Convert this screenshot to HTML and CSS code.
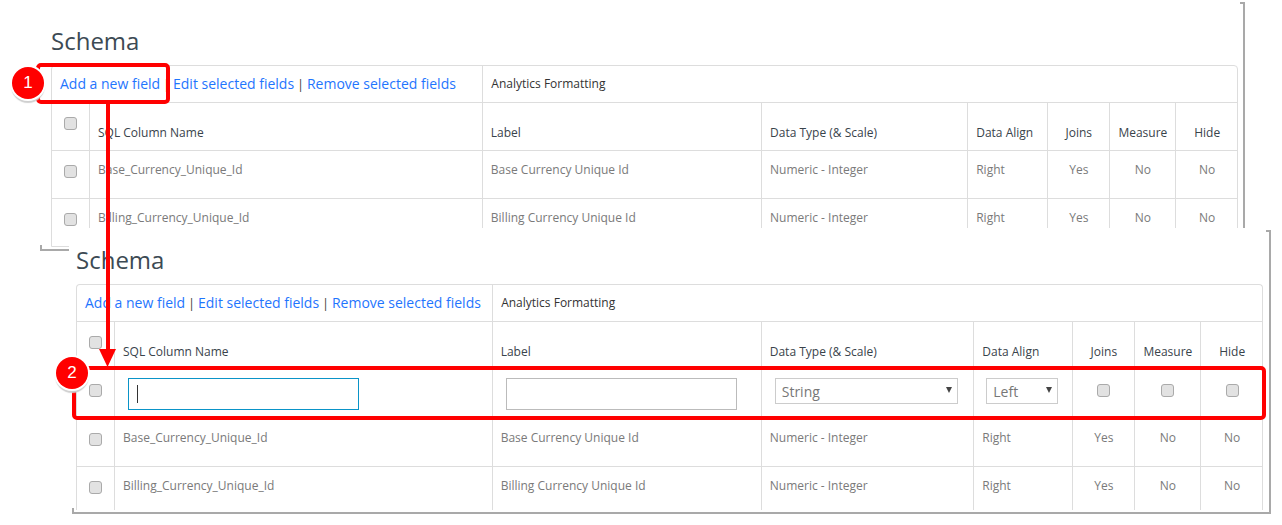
FILE: index.html
```html
<!DOCTYPE html>
<html lang="en">
<head>
<meta charset="utf-8">
<title>Schema</title>
<link rel="stylesheet" href="styles.css">
</head>
<body>
<section class="window window-a">
  <h2 class="title">Schema</h2>
  <div class="table-clip">
    <table class="schema schema-a">
      <colgroup><col class="c-check"><col class="c-name"><col class="c-label"><col class="c-type"><col class="c-align"><col class="c-joins"><col class="c-measure"><col class="c-hide"></colgroup>
      <tr class="toolbar">
        <td colspan="2"><a href="#">Add a new field</a> | <a href="#">Edit selected fields</a> | <a href="#">Remove selected fields</a></td>
        <td colspan="6">Analytics Formatting</td>
      </tr>
      <tr class="head">
        <th class="check"><input type="checkbox" class="box"></th>
        <th>SQL Column Name</th><th>Label</th><th>Data Type (&amp; Scale)</th><th>Data Align</th>
        <th class="mid">Joins</th><th class="mid">Measure</th><th class="mid">Hide</th>
      </tr>
      <tr class="row">
        <td class="check"><input type="checkbox" class="box"></td>
        <td>Base_Currency_Unique_Id</td><td>Base Currency Unique Id</td><td>Numeric - Integer</td><td>Right</td>
        <td class="mid">Yes</td><td class="mid">No</td><td class="mid">No</td>
      </tr>
      <tr class="row">
        <td class="check"><input type="checkbox" class="box"></td>
        <td>Billing_Currency_Unique_Id</td><td>Billing Currency Unique Id</td><td>Numeric - Integer</td><td>Right</td>
        <td class="mid">Yes</td><td class="mid">No</td><td class="mid">No</td>
      </tr>
    </table>
  </div>
</section>

<section class="window window-b">
  <h2 class="title">Schema</h2>
  <div class="table-clip">
    <table class="schema schema-b">
      <colgroup><col class="c-check"><col class="c-name"><col class="c-label"><col class="c-type"><col class="c-align"><col class="c-joins"><col class="c-measure"><col class="c-hide"></colgroup>
      <tr class="toolbar">
        <td colspan="2"><a href="#">Add a new field</a> | <a href="#">Edit selected fields</a> | <a href="#">Remove selected fields</a></td>
        <td colspan="6">Analytics Formatting</td>
      </tr>
      <tr class="head">
        <th class="check"><input type="checkbox" class="box"></th>
        <th>SQL Column Name</th><th>Label</th><th>Data Type (&amp; Scale)</th><th>Data Align</th>
        <th class="mid">Joins</th><th class="mid">Measure</th><th class="mid">Hide</th>
      </tr>
      <tr class="row edit">
        <td class="check"><input type="checkbox" class="box"></td>
        <td><span class="field focused"><input type="text" class="text"></span></td>
        <td><span class="field"><input type="text" class="text"></span></td>
        <td><span class="pick pick-type"><select><option>String</option></select></span></td>
        <td><span class="pick pick-align"><select><option>Left</option></select></span></td>
        <td class="mid"><input type="checkbox" class="box"></td>
        <td class="mid"><input type="checkbox" class="box"></td>
        <td class="mid"><input type="checkbox" class="box"></td>
      </tr>
      <tr class="row">
        <td class="check"><input type="checkbox" class="box"></td>
        <td>Base_Currency_Unique_Id</td><td>Base Currency Unique Id</td><td>Numeric - Integer</td><td>Right</td>
        <td class="mid">Yes</td><td class="mid">No</td><td class="mid">No</td>
      </tr>
      <tr class="row">
        <td class="check"><input type="checkbox" class="box"></td>
        <td>Billing_Currency_Unique_Id</td><td>Billing Currency Unique Id</td><td>Numeric - Integer</td><td>Right</td>
        <td class="mid">Yes</td><td class="mid">No</td><td class="mid">No</td>
      </tr>
    </table>
  </div>
</section>

<div class="callout callout-1"></div>
<div class="callout callout-2"></div>
<svg class="arrow" width="18" height="264" viewBox="0 0 18 264" aria-hidden="true">
  <rect x="7" y="0" width="4" height="246" fill="#f00"/>
  <polygon points="0,245 17,245 8.5,263" fill="#f00"/>
</svg>
<div class="badge badge-1">1</div>
<div class="badge badge-2">2</div>
</body>
</html>
```
FILE: styles.css
```css
* { box-sizing: border-box; }
html, body { margin: 0; height: 525px; overflow: hidden; background: #fff; }
body { position: relative; font: 12px/17px "Open Sans", sans-serif; color: #333; }

/* The two pasted screenshots lie on a free canvas */
.window { position: absolute; background: #fff; border-right: 2px solid #a9a9a9; border-bottom: 2px solid #a9a9a9; }
.window::before { content: ""; position: absolute; top: 0; right: 0; width: 3px; height: 2px; background: #a9a9a9; }
.window::after { content: ""; position: absolute; bottom: 0; left: 0; width: 2px; height: 4px; background: #a9a9a9; }
.window-a { left: 40px; top: 2px; width: 1205px; height: 249px; padding: 22px 0 0 11px; }
.window-b { left: 72px; top: 230px; width: 1199px; height: 284px; padding: 13px 0 0 4px; box-shadow: -3px -2px 0 #fff; }

.title { margin: 0 0 7px; font-weight: 400; font-size: 24px; line-height: 34px; color: #3c4a54; }

.table-clip { width: 1187px; overflow: hidden; border: 1px solid #ddd; border-radius: 4px 4px 0 0; }
.window-a .table-clip { height: 182px; }
.window-b .table-clip { height: 226px; border-bottom: 0; }

.schema { width: 1186px; table-layout: fixed; border-collapse: collapse; }
.schema td, .schema th { padding: 0 8px; border: 1px solid #ddd; text-align: left; }
.schema tr:first-child td { border-top: 0; }
.schema tr td:first-child, .schema tr th:first-child { border-left: 0; }
.schema tr td:last-child, .schema tr th:last-child { border-right: 0; }

.c-check { width: 37px; }
.schema-a .c-name { width: 393px; }
.schema-a .c-label { width: 279px; }
.schema-a .c-type { width: 206px; }
.schema-a .c-align { width: 80px; }
.schema-b .c-name { width: 378px; }
.schema-b .c-label { width: 269px; }
.schema-b .c-type { width: 212.5px; }
.schema-b .c-align { width: 99px; }
.c-joins { width: 62px; }
.c-measure { width: 66px; }
.c-hide { width: 62px; }

.toolbar td { height: 36px; vertical-align: middle; color: #333; }
.toolbar a { font-size: 14px; color: #1f75fe; text-decoration: none; }

.head th { height: 48px; padding-top: 21px; vertical-align: top; color: #39434b; font-weight: 400; }
.row td { height: 48px; padding-top: 10px; vertical-align: top; color: #7a7a7a; }
.schema .check { padding: 14px 0 0 1px; text-align: center; }
.schema .row .check { padding-top: 14px; }
.schema tr > :nth-child(2) { padding-left: 8.5px; }
.schema .mid { padding-left: 0; padding-right: 0; text-align: center; }

.box { appearance: none; display: block; margin: 0 auto; width: 13px; height: 13px; background: #e2e2e2; border: 1px solid #aaa; border-radius: 3px; }
.schema .edit td { padding-top: 8px; height: 49px; }
.schema .edit .check, .schema .edit .mid { padding-top: 14px; }

.field { position: relative; display: block; margin-left: 5px; width: 231px; height: 32px; }
.text { display: block; width: 100%; height: 100%; margin: 0; padding: 0; background: #fff; border: 1px solid #bbb; outline: 0; }
.focused .text { border-color: #0a94c8; }
.focused::after { content: ""; position: absolute; left: 9px; top: 7px; width: 1px; height: 18px; background: #333; }

.pick { position: relative; display: block; height: 26px; }
.pick-type { margin-left: 5px; width: 183px; }
.pick-align { margin-left: 4px; width: 72px; }
.pick select { appearance: none; display: block; width: 100%; height: 100%; margin: 0; padding: 2px 0 0 6px; font: 14px "Open Sans", sans-serif; color: #777; background: #fff; border: 1px solid #ccc; border-radius: 0; }
.pick::after { content: ""; position: absolute; right: 6px; top: 9px; border: 3px solid transparent; border-top: 6px solid #444; border-bottom: 0; }

/* Annotations drawn over the screenshots */
.callout { position: absolute; border: 4px solid #f00; border-radius: 5px; }
.callout-1 { left: 36px; top: 63px; width: 134px; height: 41px; }
.callout-2 { left: 72px; top: 366px; width: 1194px; height: 54px; }
.arrow { position: absolute; left: 99px; top: 104px; }
.badge { position: absolute; width: 32px; height: 32px; border-radius: 50%; background: #f00; color: #fff; font: 17px/31px "Liberation Sans", sans-serif; text-align: center; box-shadow: 0 0 0 2px #fff, 0 3px 1px 1px #cfcfcf; }
.badge-1 { left: 12px; top: 67px; }
.badge-2 { left: 56px; top: 357px; }
```
